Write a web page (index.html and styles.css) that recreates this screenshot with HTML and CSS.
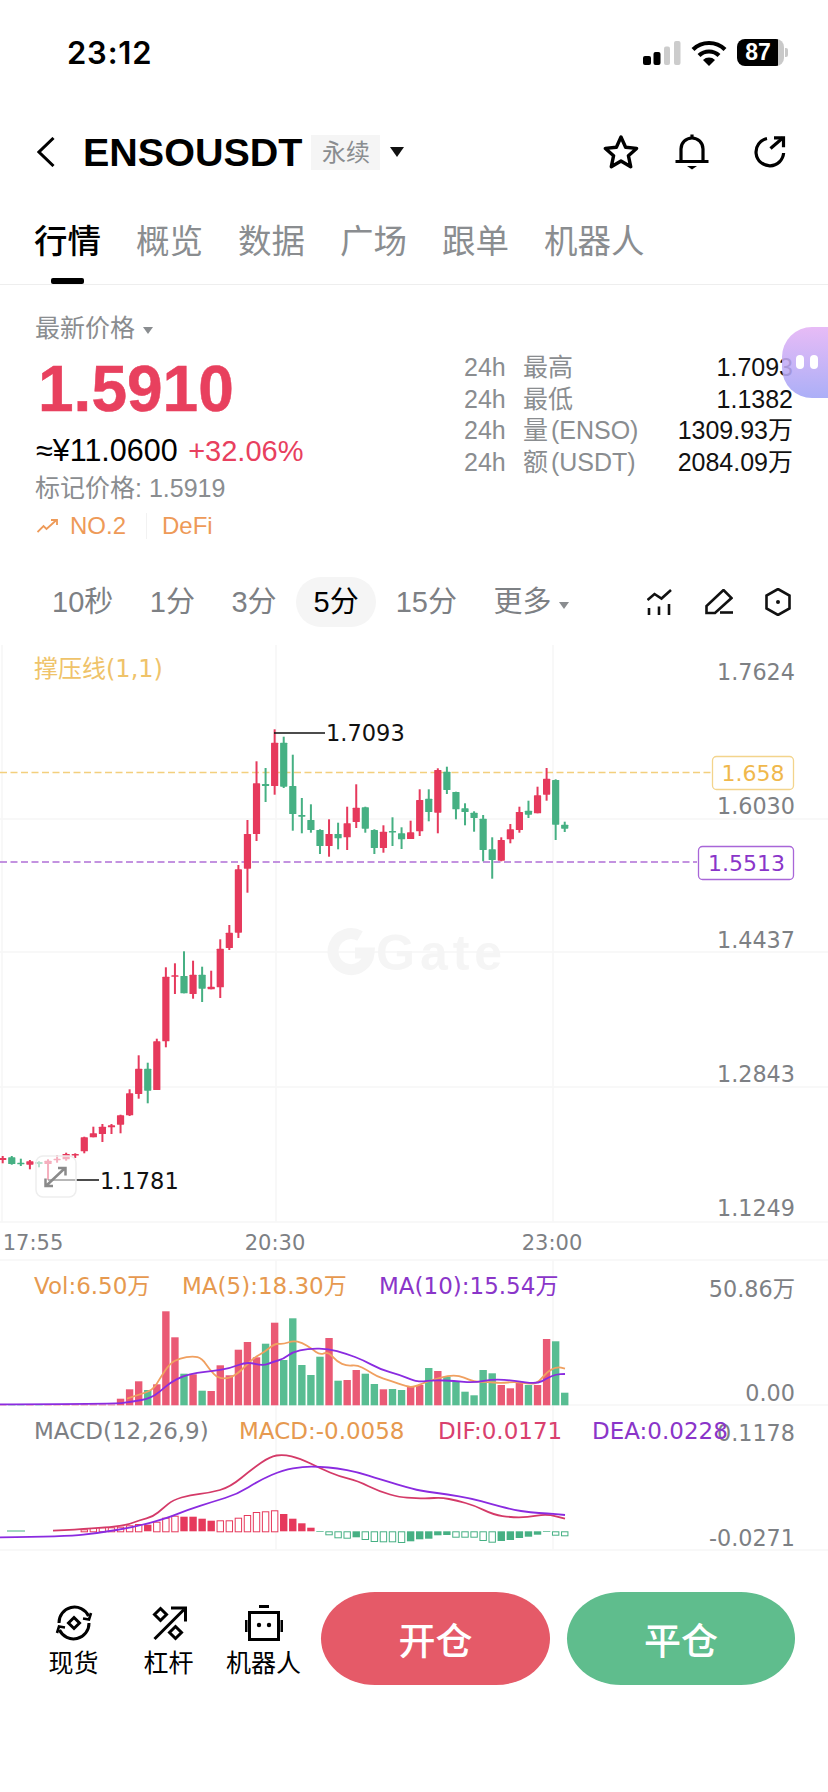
FILE: index.html
```html
<!DOCTYPE html>
<html lang="zh-CN">
<head>
<meta charset="UTF-8" />
<title>ENSOUSDT 永续</title>
<meta name="viewport" content="width=device-width, initial-scale=1" />
<link rel="stylesheet" href="styles.css">
</head>
<body>

<div class="status">
  <span class="clock">23:12</span>
  <div class="status-icons">
    <svg width="38" height="24" viewBox="0 0 38 24">
      <rect x="0" y="15" width="8" height="9" rx="2" fill="#000"/>
      <rect x="10.500" y="11" width="7" height="13" rx="2" fill="#000"/>
      <rect x="21" y="5.500" width="6" height="18.500" rx="2" fill="#ccc"/>
      <rect x="31" y="0" width="6.500" height="24" rx="2" fill="#ccc"/>
    </svg>
    <svg width="36" height="26" viewBox="0 0 36 26" fill="none" stroke="#000" stroke-width="4.200">
      <path d="M2 9.500a23 23 0 0 1 32 0"/>
      <path d="M8 15.500a14.500 14.500 0 0 1 20 0"/>
      <path d="M18 26l-6-6a8.500 8.500 0 0 1 12 0z" fill="#000" stroke="none"/>
    </svg>
    <div class="battery">87</div>
  </div>
</div>

<div class="header">
  <svg class="back" width="18" height="30" viewBox="0 0 18 30" fill="none" stroke="#000" stroke-width="3"><path d="M16.500 1L2 15l14.500 14"/></svg>
  <span class="symbol">ENSOUSDT</span>
  <span class="badge">永续</span>
  <span class="caret"></span>
  <div class="header-icons">
    <svg width="36" height="36" viewBox="0 0 36 36" fill="none" stroke="#000" stroke-width="3.400" stroke-linejoin="round"><path d="M18 3l4.600 10.200 11 1.200-8.200 7.300 2.300 11L18 27l-9.700 5.700 2.300-11-8.200-7.300 11-1.200z"/></svg>
    <svg class="bell" width="34" height="36" viewBox="0 0 34 36" fill="none" stroke="#000" stroke-width="3.200"><path d="M6 27V15a11 11 0 0 1 22 0v12"/><path d="M0.500 27.500h33"/><path d="M17 0.500v3"/><path d="M12 32h10l-5 3.500z" fill="#000" stroke="none"/></svg>
    <svg class="refresh" width="33" height="32" viewBox="0 0 33 32" fill="none" stroke="#000" stroke-width="3.200"><path d="M13 2.500A13.800 13.800 0 1 0 29.600 17"/><path d="M16.500 12.500L29 1.800"/><path d="M20 1.800h9.500v9.500"/></svg>
  </div>
</div>

<div class="tabs">
  <span class="tab active">行情</span>
  <span class="tab">概览</span>
  <span class="tab">数据</span>
  <span class="tab">广场</span>
  <span class="tab">跟单</span>
  <span class="tab">机器人</span>
</div>

<div class="quote">
  <div class="quote-left">
    <div class="price-label">最新价格<span class="caret small"></span></div>
    <div class="price">1.5910</div>
    <div class="cny">≈¥11.0600 <span class="change">+32.06%</span></div>
    <div class="mark">标记价格: 1.5919</div>
    <div class="tags">
      <svg width="21" height="14" viewBox="0 0 21 14" fill="none" stroke="#ee9a58" stroke-width="1.800"><path d="M0.500 13l6-6 3 3 10-9"/><path d="M14 1h6v5"/></svg>
      <span>NO.2</span>
      <i class="tag-sep"></i>
      <span>DeFi</span>
    </div>
  </div>
  <div class="stats">
    <div class="stat"><span class="h">24h</span><span class="name">最高</span><span class="val">1.7093</span></div>
    <div class="stat"><span class="h">24h</span><span class="name">最低</span><span class="val">1.1382</span></div>
    <div class="stat"><span class="h">24h</span><span class="name">量 (ENSO)</span><span class="val">1309.93万</span></div>
    <div class="stat"><span class="h">24h</span><span class="name">额 (USDT)</span><span class="val">2084.09万</span></div>
  </div>
  <div class="bubble"><i></i><i></i></div>
</div>

<div class="intervals">
  <span class="iv">10秒</span>
  <span class="iv">1分</span>
  <span class="iv">3分</span>
  <span class="iv on">5分</span>
  <span class="iv">15分</span>
  <span class="iv">更多<span class="caret small"></span></span>
  <div class="iv-icons">
    <svg width="26" height="26" viewBox="0 0 26 26" fill="none" stroke="#111" stroke-width="2.600"><path d="M0.500 11l7-6 7 4.500 9.500-8.500"/><path d="M2 19v7M12 17.500V26M22 15v11"/></svg>
    <svg width="28" height="26" viewBox="0 0 28 26" fill="none" stroke="#111" stroke-width="2.600"><path d="M1.500 24v-7L18.500 1l8 8L10 24z"/><path d="M15 23.500h13"/></svg>
    <svg width="26" height="28" viewBox="0 0 26 28" fill="none" stroke="#111" stroke-width="2.600"><path d="M13 1l11.500 6.500v13L13 27 1.500 20.500v-13z"/><circle cx="13" cy="14" r="2" fill="#111" stroke="none"/></svg>
  </div>
</div>

<svg class="chart" width="828" height="920" viewBox="0 640 828 920">
  <g class="grid">
    <path d="M2 645V1222M276 645V1222M553 645V1222"/>
    <path d="M0 819H828M0 952H828M0 1087H828M0 1222H828"/>
    <path d="M0 1260H828M0 1405H828M0 1550H828"/>
    <path d="M276 1260V1550M553 1260V1550"/>
  </g>

  <g class="watermark">
    <path d="M360 936a18 18 0 1 0 9 17h-14" fill="none" stroke="#f5f5f5" stroke-width="11"/>
    <text x="376" y="970">Gate</text>
  </g>

  <text class="legend resist" x="34" y="677">撑压线(1,1)</text>

  <path class="dash gold" d="M0 772.500H711"/>
  <path class="dash violet" d="M0 862H697"/>

  <g id="candles"></g>

  <path class="pointer" d="M274 733H325"/>
  <text class="peak" x="326" y="741">1.7093</text>
  <path class="pointer" d="M48 1180H99"/>
  <text class="peak" x="100" y="1189">1.1781</text>

  <rect class="expand" x="36" y="1156" width="40" height="41" rx="7"/>
  <path class="expand-arrows" d="M47 1185l17-16M58 1168h7.500v7.500M53 1186h-7.500v-7.500"/>

  <g class="axis">
    <text x="795" y="680">1.7624</text>
    <text x="795" y="814">1.6030</text>
    <text x="795" y="948">1.4437</text>
    <text x="795" y="1082">1.2843</text>
    <text x="795" y="1216">1.1249</text>
    <text x="795" y="1297">50.86万</text>
    <text x="795" y="1401">0.00</text>
    <text x="795" y="1441">0.1178</text>
    <text x="795" y="1546">-0.0271</text>
  </g>

  <rect class="tag-box gold" x="712.500" y="756.500" width="81" height="33" rx="4"/>
  <text class="tag-text gold" x="753" y="781">1.658</text>
  <rect class="tag-box violet" x="698.500" y="846.500" width="95" height="33" rx="4"/>
  <text class="tag-text violet" x="746.500" y="871">1.5513</text>

  <g class="times">
    <text x="33" y="1250">17:55</text>
    <text x="275" y="1250">20:30</text>
    <text x="552" y="1250">23:00</text>
  </g>

  <g id="volume"></g>
  <g id="macd"></g>
  <g id="lines"></g>

  <text class="legend orange" x="34" y="1294">Vol:6.50万</text>
  <text class="legend orange" x="182" y="1294">MA(5):18.30万</text>
  <text class="legend purple" x="379" y="1294">MA(10):15.54万</text>

  <text class="legend grey" x="34" y="1439">MACD(12,26,9)</text>
  <text class="legend orange" x="239" y="1439">MACD:-0.0058</text>
  <text class="legend rose" x="438" y="1439">DIF:0.0171</text>
  <text class="legend purple" x="592" y="1439">DEA:0.0228</text>
</svg>

<div class="actions">
  <div class="tools">
    <div class="tool">
      <svg width="38" height="38" viewBox="0 0 38 38" fill="none" stroke="#000" stroke-width="3"><path d="M4 19a15.500 15.500 0 0 1 29.500-7"/><path d="M34 19a15.500 15.500 0 0 1-29.500 7"/><path d="M28 14.500l6 1 2-6.500" stroke-width="2.600"/><path d="M10 23.500l-6-1-2 6.500" stroke-width="2.600"/><path d="M19 13.500l5.500 5.500-5.500 5.500-5.500-5.500z"/></svg>
      <span>现货</span>
    </div>
    <div class="tool">
      <svg width="36" height="36" viewBox="0 0 36 36" fill="none" stroke="#000" stroke-width="3"><path d="M3.500 34L33 4.500"/><path d="M20 3h14.500v13.500"/><path d="M9.500 3.500l6 6-6 6-6-6z"/><path d="M24.500 21.500l6 6-6 6-6-6z"/></svg>
      <span>杠杆</span>
    </div>
    <div class="tool">
      <svg width="38" height="36" viewBox="0 0 38 36" fill="none" stroke="#000" stroke-width="3"><path d="M14 1.500h10" /><path d="M4.500 7.500h29v27h-29z"/><path d="M1 15v12M37 15v12"/><circle cx="14" cy="20" r="2.200" fill="#000" stroke="none"/><circle cx="24" cy="20" r="2.200" fill="#000" stroke="none"/></svg>
      <span>机器人</span>
    </div>
  </div>
  <button class="trade open">开仓</button>
  <button class="trade close">平仓</button>
</div>

<script src="chart.js"></script>
</body>
</html>
```

FILE: styles.css
```css
* { box-sizing: border-box; }
body { margin: 0; width: 828px; height: 1792px; background: #fff; overflow: hidden; color: #000; font-family: "Liberation Sans", "Noto Sans CJK SC", sans-serif; }

.status { height: 105px; display: flex; align-items: center; justify-content: space-between; padding: 0 40px 0 67px; }
.clock { font-family: Inter, sans-serif; font-weight: 600; font-size: 31px; letter-spacing: .8px; }
.status-icons { display: flex; align-items: center; gap: 10px; }
.battery { position: relative; width: 47px; height: 27px; border-radius: 8px; background: linear-gradient(90deg, #000 87%, #c9c9c9 87%); color: #fff; font-weight: bold; font-size: 23px; line-height: 27px; text-align: center; padding-right: 5px; margin-right: 4px; }
.battery::after { content: ""; position: absolute; right: -4px; top: 9px; width: 3px; height: 9px; border-radius: 0 2px 2px 0; background: #c9c9c9; }

.header { height: 94px; display: flex; align-items: center; padding: 0 41px 0 37px; }
.symbol { margin-left: 28px; font-size: 39.500px; font-weight: bold; }
.badge { margin-left: 9px; width: 69px; height: 35px; background: #f5f5f5; color: #8a8d90; font-size: 24px; line-height: 35px; text-align: center; }
.caret { display: inline-block; margin-left: 10px; border-left: 7px solid transparent; border-right: 7px solid transparent; border-top: 10px solid #111; }
.caret.small { margin-left: 8px; border-left-width: 5.500px; border-right-width: 5.500px; border-top: 7px solid #8a8d90; vertical-align: 3px; }
.header-icons { margin-left: auto; display: flex; align-items: center; }
.bell { margin-left: 36px; }
.refresh { margin-left: 45px; }

.tabs { height: 86px; display: flex; gap: 35px; padding: 21px 0 0 34px; border-bottom: 1px solid #eee; }
.tab { position: relative; height: 44px; font-size: 33.500px; line-height: 44px; color: #8a8d90; white-space: nowrap; }
.tab.active { color: #000; font-weight: 500; }
.tab.active::after { content: ""; position: absolute; left: 17px; top: 58px; width: 33px; height: 6px; border-radius: 2px; background: #000; }

.quote { position: relative; height: 292px; display: flex; justify-content: space-between; padding: 27px 35px 0 35px; }
.price-label { height: 32px; font-size: 25px; line-height: 32px; color: #8a8d90; }
.price { margin: 15px 0 0 3px; height: 60px; font-size: 64px; line-height: 60px; font-weight: bold; color: #e8405e; -webkit-text-stroke: .5px #e8405e; }
.cny { margin: 14px 0 0 1px; height: 34px; font-size: 30.500px; line-height: 34px; white-space: nowrap; }
.change { margin-left: 2px; font-size: 29px; color: #e8405e; }
.mark { margin-top: 4px; height: 34px; font-size: 25px; line-height: 34px; color: #8a8d90; }
.tags { margin-top: 6px; height: 30px; display: flex; align-items: center; font-size: 24px; color: #ee9a58; }
.tags svg { margin: 0 12px 0 2px; }
.tag-sep { width: 1px; height: 26px; margin: 0 15px 0 20px; background: #f2f2f2; }
.stats { width: 329px; margin-top: 40px; }
.stat { display: flex; height: 31.600px; font-size: 25px; line-height: 31.600px; color: #8a8d90; white-space: nowrap; }
.stat .h { width: 59px; }
.stat .name { word-spacing: -4px; }
.stat .val { margin-left: auto; color: #111; word-spacing: 0; }
.bubble { position: absolute; right: -8px; top: 42px; width: 54px; height: 71px; display: flex; gap: 6px; padding: 28px 0 0 14px; border-radius: 30px 0 0 30px; background: linear-gradient(180deg, rgba(228, 178, 245, .88), rgba(160, 164, 246, .88)); }
.bubble i { width: 8px; height: 14px; border-radius: 4px; background: #fff; }

.intervals { height: 50px; display: flex; align-items: center; gap: 2.500px; padding: 0 37px 0 35px; }
.iv { height: 50px; padding: 0 17px; font-size: 29px; line-height: 50px; color: #7d8084; white-space: nowrap; }
.iv.on { padding: 0 17.500px; border-radius: 25px; background: #f5f5f5; color: #000; }
.iv-icons { margin-left: auto; display: flex; align-items: center; gap: 32px; }

.chart { display: block; margin-top: 13px; font-family: "DejaVu Sans", "Noto Sans CJK SC", sans-serif; }
.grid path { fill: none; stroke: #f6f6f6; stroke-width: 1.500; }
.watermark text { font-family: "Liberation Sans", sans-serif; font-size: 50px; font-weight: bold; letter-spacing: 5px; fill: #f5f5f5; }
.legend { font-size: 23px; }
.resist { fill: #efc36a; font-size: 24px; }
.orange { fill: #e6994f; }
.purple { fill: #8a35c9; }
.rose { fill: #d9406e; }
.grey { fill: #7d8084; }
.dash { fill: none; stroke-width: 1.300; stroke-dasharray: 7 3.500; }
.dash.gold { stroke: #f3cf7d; }
.dash.violet { stroke: #b06fd6; }
.pointer { stroke: #111; stroke-width: 1.500; }
.peak { font-size: 22.500px; fill: #111; }
.expand { fill: rgba(255, 255, 255, .6); stroke: #eee; stroke-width: 1.500; }
.expand-arrows { fill: none; stroke: #8a8a8a; stroke-width: 2.500; }
.axis text { font-size: 22.300px; text-anchor: end; fill: #7d8084; }
.times text { font-size: 21px; text-anchor: middle; fill: #7d8084; }
.tag-box { fill: #fff; stroke-width: 1.300; }
.tag-box.gold { stroke: #f3d48c; }
.tag-box.violet { stroke: #a866d8; }
.tag-text { font-size: 22px; text-anchor: middle; }
.tag-text.gold { fill: #f0b84c; }
.tag-text.violet { fill: #8a35c9; }

.actions { display: flex; padding: 32px 33px 0 26px; }
.tools { display: flex; width: 286px; margin-right: 9px; }
.tool { width: 95px; padding-top: 12px; display: flex; flex-direction: column; align-items: center; font-size: 25px; line-height: 28px; white-space: nowrap; }
.tool svg { height: 38px; margin-bottom: 7px; }
.trade { height: 93px; border: none; border-radius: 54px / 46.500px; color: #fff; font-family: inherit; font-size: 37px; font-weight: 500; }
.trade.open { width: 229px; background: #e55a68; }
.trade.close { width: 228px; margin-left: 17px; background: #5fbd8d; }
```

FILE: chart.js
```js
const SVG_NS = 'http://www.w3.org/2000/svg';
const RED = '#e6395c', GREEN = '#46b083';
const VOL_RED = '#ea5a75', VOL_GREEN = '#58bd92';

function cx(i) { return 2.7 + 9.065 * i; }

function add(parent, tag, attrs) {
  const el = document.createElementNS(SVG_NS, tag);
  for (const k in attrs) el.setAttribute(k, attrs[k]);
  document.getElementById(parent).appendChild(el);
}

// high, body top, body bottom, low, 1 = red
const candles = [
  [1156,1158,1160,1163.3,1],[1156,1157.3,1164,1164.7,0],[1158.7,1162.7,1164.3,1166,0],
  [1160,1161.3,1164.7,1169.3,1],[1161.3,1162,1164,1167.3,0],[1159.3,1160.7,1164,1180,1],
  [1155.3,1158.7,1160,1162.7,1],[1152.7,1154,1159.3,1160.7,1],[1153.3,1154,1155.3,1158,1],
  [1136.7,1137.3,1151.3,1153.3,1],[1126.7,1133.3,1137.3,1137.3,1],[1124,1126.7,1134,1142,1],
  [1124,1125.3,1127.3,1134,1],[1114.7,1115.3,1124.7,1133.3,1],[1089.3,1093.3,1115.3,1116,1],
  [1055.3,1068.7,1094,1098.7,1],[1062.7,1068.7,1090.7,1103.3,0],[1038.7,1041.3,1090,1090,1],
  [967.3,976.7,1041.3,1047.3,1],[963.3,975.3,976,994,1],[951.3,976,993.3,993.3,0],
  [960.7,974.7,994,998.7,1],[966.7,974.7,988.7,1002,0],[970.7,986.7,989.3,989.3,1],
  [939.3,948.7,987.3,998,1],[925,932.7,948,950,1],[865,869.3,932.7,938,1],
  [820,834,868.7,892.7,1],[761.3,783.3,834,841,1],[768,784,786,802,0],
  [729.3,742.7,786,794.7,1],[736.7,742.7,786.7,788,0],[754.7,786,814,830.7,0],
  [798,815,816.7,833.3,0],[804.3,820,830,832.7,0],[829.3,830,846,854,0],
  [819.3,834,846,856.7,1],[822.7,834,838.3,849.3,0],[806.7,823.3,837.3,850,1],
  [784.3,807.7,822,828,1],[806.7,807.3,828.7,832.7,0],[829.3,830,848,854,0],
  [825.3,831.7,848,852.7,1],[817.3,831,832,846,0],[827.3,833.3,839.3,849,0],
  [820.7,832.3,839,839,1],[789.3,800,831.3,836,1],[789.3,798.7,812,821.3,0],
  [768.3,770,812.7,833.3,1],[766.7,771.7,790,794,0],[791.7,792,809.3,819.3,0],
  [803.3,808.3,812,825.3,0],[811.3,812.7,818,831.7,0],[815,818.7,850,861.3,0],
  [837.3,849.3,860,878.7,0],[837.3,840,860.7,861.3,1],[824,829.3,839.3,843.3,1],
  [806.7,812,830,832.7,1],[800.7,810.7,814.7,818,0],[786.7,795.3,813.3,813.3,1],
  [768,778.7,794.7,800.7,1],[779.3,780,824.7,840,0],[821.7,824.7,828.7,832,0]
];

const VOL_BASE = 1405.3;
const volTops = [
  1404.5,1404.5,1404.5,1404.5,1404.5,1404.5,1404.5,1404,1404.5,1404.5,1404.5,1404.5,1404.5,
  1398.7,1389.3,1381.3,1390,1384.3,1311.3,1337.3,1373.7,1374.3,1390.7,1391,1365.3,1375.3,
  1349.7,1342,1357.3,1343.7,1322.7,1360,1318.3,1365,1375,1356.7,1338,1380.7,1380,1370,
  1373.7,1384,1389.3,1389,1390,1386.7,1385,1368,1371,1376.7,1381.7,1391.7,1395.3,1370,
  1373.3,1385,1388.3,1382.7,1385,1385,1339,1341.3,1392.7
];

// MACD bars start at candle 9; h = hollow, f = filled
const MACD_BASE = 1531.3;
const macdEnds = [
  1529.3,1528,1527.3,1527.3,1526.7,1525.3,1524,1524.7,1521.7,1517.7,1515.7,1516.7,1516.7,
  1518.7,1520.7,1520.3,1520.3,1517.7,1515,1512,1511.3,1510.3,1514,1518.7,1523.3,1527.7,
  1532,1534.3,1537.3,1537.7,1537.3,1539,1541,1541.3,1541.3,1542,1541.3,1539.3,1538.7,1535.3,
  1535,1536.7,1536.7,1536.7,1540,1541.7,1541,1540,1538,1536.7,1534.7,1532,1534.7,1535.3
];
const macdFill = 'hhhhhhhfhhhffffhhhhhhhfffffhhhfhhhhhfffffhhhhhffffffhh';

const lines = [
  ['#f0a060', [127,1398.7,138,1395,153,1390,160,1378.3,170,1363.3,180,1358.3,193,1356,202,1358.3,210,1370,218,1378.3,230,1378.3,240,1371.7,253,1358.3,265,1351.7,275,1343.3,283,1344.3,293,1340.7,302,1342.7,312,1349,320,1355,328,1351.7,337,1361.7,347,1366,357,1365,367,1370,377,1376.7,390,1380.7,407,1386.7,414,1387,427,1381.7,441,1377.3,454,1375,464,1377.3,474,1382,487,1381.7,501,1383.3,514,1381.7,527,1383.3,537,1384,547,1371.7,557,1366.7,565,1368.7]],
  ['#8a2be0', [0,1404.3,113,1404,133,1401.7,150,1398.3,160,1391.7,170,1382.7,183,1376,197,1372.7,213,1371,230,1368.3,247,1361.7,263,1366,273,1361.7,283,1359.3,293,1351.7,307,1349,327,1348.3,347,1354,363,1360,380,1369.3,400,1375,414,1380.7,421,1381.7,434,1380,454,1381,474,1382.7,494,1379,514,1380.7,537,1384,547,1378.3,556,1374.3,565,1374]],
  ['#d43a68', [53,1530.7,100,1528.3,127,1525,140,1520,153,1516.7,163,1508.3,173,1500,190,1495,210,1492.7,230,1487.3,253,1468.3,270,1456.7,283,1454.3,300,1458.3,320,1468.3,340,1476.7,357,1480.7,380,1491.7,400,1497.3,414,1498,427,1498.7,441,1497.3,457,1500.7,474,1505.3,494,1515,511,1517.3,527,1517.3,547,1514,565,1518.7]],
  ['#8a2be0', [0,1537.3,67,1536.7,100,1532.7,133,1527.3,167,1518.3,187,1510,213,1501.7,237,1494.3,260,1480,283,1470,303,1466.7,320,1466.7,337,1468.3,357,1472,380,1479.3,414,1489.3,427,1491.7,447,1494.3,471,1498.3,491,1504,511,1509.3,531,1512.7,547,1513.3,565,1515]]
];

candles.forEach(function (c, i) {
  const color = c[4] ? RED : GREEN;
  add('candles', 'rect', { x: cx(i) - 1, y: c[0], width: 2, height: c[3] - c[0], fill: color });
  add('candles', 'rect', { x: cx(i) - 3.6, y: c[1], width: 7.2, height: Math.max(c[2] - c[1], 1.5), rx: 0.6, fill: color });
  add('volume', 'rect', { x: cx(i) - 3.7, y: volTops[i], width: 7.4, height: VOL_BASE - volTops[i], fill: c[4] ? VOL_RED : VOL_GREEN });
});

macdEnds.forEach(function (end, n) {
  const i = n + 9;
  const up = end < MACD_BASE;
  const color = up ? RED : GREEN;
  const y = Math.min(end, MACD_BASE), h = Math.abs(end - MACD_BASE);
  if (macdFill[n] === 'f') {
    add('macd', 'rect', { x: cx(i) - 3.7, y: y, width: 7.4, height: h, fill: color });
  } else {
    add('macd', 'rect', { x: cx(i) - 3.2, y: y + 0.5, width: 6.4, height: h, fill: '#fff', stroke: color, 'stroke-width': 1 });
  }
});
add('macd', 'rect', { x: 7, y: 1530.5, width: 18, height: 1, fill: GREEN });

// smooth the hand-read points through their midpoints
lines.forEach(function (line) {
  const p = line[1];
  let d = 'M' + p[0] + ' ' + p[1];
  for (let i = 2; i < p.length - 2; i += 2) {
    d += 'Q' + p[i] + ' ' + p[i + 1] + ' ' + (p[i] + p[i + 2]) / 2 + ' ' + (p[i + 1] + p[i + 3]) / 2;
  }
  d += 'L' + p[p.length - 2] + ' ' + p[p.length - 1];
  add('lines', 'path', { d: d, fill: 'none', stroke: line[0], 'stroke-width': 1.8 });
});
```
